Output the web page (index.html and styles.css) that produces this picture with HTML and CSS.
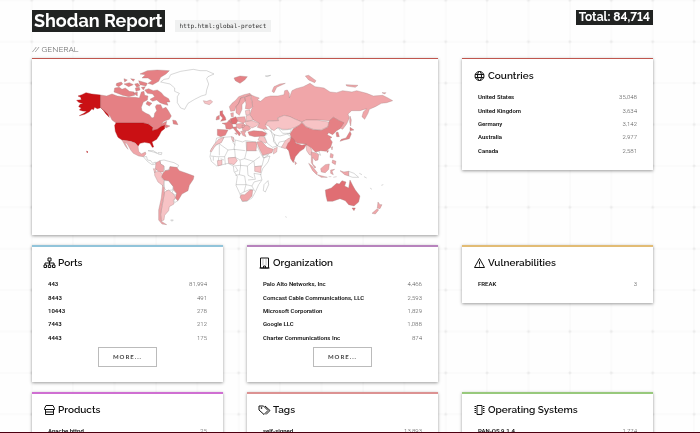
FILE: index.html
```
<!DOCTYPE html>
<html lang="en">
<head>
  <meta charset="UTF-8" />
  <meta name="viewport" content="width=device-width, initial-scale=1.0"/>
  <title>Shodan Report</title>
  <link rel="stylesheet" href="styles.css">
</head>
<body>

  <svg class="backdrop" aria-hidden="true">
    <defs>
      <pattern id="cells" x="11" y="21" width="41.4" height="41.4" patternUnits="userSpaceOnUse">
        <path d="M20.7 0V41.4M0 20.7H41.4" stroke="#f8f8f8" />
        <path d="M19.2 20.7h3M20.7 19.2v3" stroke="#e6e6e6" />
      </pattern>
    </defs>
    <rect width="100%" height="100%" fill="url(#cells)" />
  </svg>

  <div class="page">
    <header>
      <h1>Shodan Report</h1>
      <code>http.html:global-protect</code>
      <div class="total">Total: 84,714</div>
    </header>

    <div class="section">// GENERAL</div>

    <main>
      <section class="card map red">
        <svg viewBox="0 0 406 176" role="img" aria-label="World map">
          <!-- Americas -->
          <g class="land" transform="translate(28 1) scale(.3333)">
            <path class="c5" d="M122 105V143L112 146 104 142 100 150 96 146 88 155 74 163 58 167 72 160 80 154 68 153 58 150 64 144 56 140 60 133 70 131 56 127 50 121 64 119 62 112 54 108 66 104 78 98 95 102ZM122 143L132 150 144 162 148 172 138 162 130 151Z"/>
            <path class="c3" d="M122 105L140 108 156 102 172 108 200 112 226 112 238 114 244 96 252 94 254 106 264 108 262 120 250 126 244 142 246 152 258 160 268 164 276 174 282 172 284 160 290 152 286 140 290 134 302 134 308 146 318 142 326 154 334 168 328 178 312 184 304 192 320 184 318 194 330 198 318 204 312 196 304 198 292 208 276 212 278 200 266 192 250 189H168L156 180 150 168 142 160 132 150 122 143ZM338 180L348 182 354 194 340 192Z"/>
            <path class="c3" d="M254 90L266 86 280 92 292 90 304 98 312 108 326 116 330 126 320 126 324 136 310 132 300 128 290 120 278 124 270 118 284 110 278 102 262 100ZM164 84L178 82 186 88 196 84 208 94 222 96 224 106 206 110 188 106 178 102 162 96ZM170 70L184 66 188 72 176 80 168 76ZM192 72L208 68 220 74 206 80ZM224 72L234 70 240 78 230 82ZM212 56L224 58 220 64ZM192 56L202 60 194 66ZM236 62L262 70 258 78 240 74ZM226 84L238 82 240 90 228 94ZM244 82L256 80 250 90ZM240 42L262 32 292 30 328 32 318 42 302 52 296 64 278 74 264 70 276 62 264 54 246 54 256 44ZM262 124L276 130 268 138 258 132ZM220 100L232 96 232 108Z"/>
            <path class="c5" d="M168 189H250L266 193 278 202 276 212 292 208 304 199 314 196 314 206 304 214 298 226 290 238 276 246 281 261 277 262 270 250 254 247 240 250 234 259 226 249 212 244 186 240 174 232 166 214 164 196ZM80 273L84 276 81 278Z"/>
            <path class="c2" d="M186 240L212 244 226 249 234 258 236 274 244 282 256 276 258 282 250 290 236 288 220 280 212 270 202 252 194 246 204 268 196 258Z"/>
            <path class="c0" d="M250 290L260 290 262 300 272 302 278 310 286 306 288 312 276 314 262 304ZM264 272L280 272 292 280 280 276ZM294 278L306 278 304 284 294 282ZM300 302L312 300 326 304 342 308 356 316 352 324 330 320 326 330 314 332 312 318 302 312ZM312 362L326 362 340 380 338 390 320 392 314 386ZM340 390L350 400 346 406 336 398ZM346 414L354 422 344 428 342 422Z"/>
            <path class="c2" d="M288 308L300 302 302 312 312 318 310 336 298 336 286 326Z"/>
            <path class="c3" d="M304 350L310 338 316 332 328 330 330 320 350 322 358 332 380 340 402 348 400 358 388 376 384 392 366 402 354 422 346 414 350 400 340 388 340 380 326 362 312 360Z"/>
            <path class="c1" d="M284 336L298 334 308 342 304 352 312 362 310 378 294 366 284 346ZM280 326L290 328 284 338ZM314 396L326 390 342 404 346 412 340 422 342 432 328 440 326 452 314 466 312 480 304 484 302 462 308 430Z"/>
            <path class="c2" d="M308 376L313 384 313 400 306 436 302 464 304 484 320 494 306 492 296 480 296 450 304 414Z"/>
            <path class="c0" d="M302 66L312 58 326 56 332 44 362 34 400 28 420 32 440 32 462 42 444 50 440 56 446 72 440 90 438 104 424 108 404 118 384 130 374 148 362 144 352 128 352 110 358 100 344 94 344 84 330 72ZM332 480L340 480 336 484Z"/>
            <path class="c1" d="M430 122L440 124 452 120 458 126 448 134 434 130Z"/>
          </g>
          <!-- Europe, Africa, Asia and Oceania -->
          <g class="land" transform="translate(168 1) scale(.3333)">
            <path class="c2" d="M152 104L166 110 178 114 172 120 182 124 196 112 212 108 234 108 252 104 254 92 262 90 268 100 268 114 276 92 288 86 310 80 330 70 345 80 372 84 390 96 410 98 428 92 456 96 470 92 500 100 520 108 548 106 564 114 578 122 560 128 544 130 526 140 508 148 504 160 494 178 486 170 490 156 500 146 480 152 455 152 444 162 448 174 440 192 428 208 420 204 430 190 420 184 400 172 388 182 362 180 340 180 318 180 306 186 286 178 270 170 252 166 232 174 236 182 204 182 196 196 204 210 190 208 172 202 178 190 160 180 150 164 154 150 158 140 156 124ZM216 94L222 80 240 72 256 70 230 82 222 98ZM316 48L326 46 348 62 344 68 326 60ZM438 74L474 76 466 82 440 78ZM546 98L558 98 554 102ZM450 168L454 180 452 198 449 186Z"/>
            <path class="c3" d="M102 54L120 48 142 50 134 60 120 70 106 62Z"/>
            <path class="c2" d="M88 140L96 130 108 120 116 110 132 104 150 100 154 106 134 110 122 114 116 130 108 140 104 152 92 154ZM116 130L122 114 134 112 136 122 126 134 126 148 118 166 108 158 108 140ZM134 112L150 104 156 126 158 140 148 148 136 146 138 132ZM92 160L100 158 100 170 94 170Z"/>
            <path class="c4" d="M60 154L68 152 68 160 76 172 78 180 62 184 68 174 60 166ZM92 176L108 170 114 182 108 192 94 192Z"/>
            <path class="c3" d="M50 170L58 166 58 178 48 180ZM66 190L80 188 86 182 96 190 100 204 90 208 78 206 76 194ZM52 208L84 210 76 226 62 230 52 226ZM98 202L110 200 110 208 122 220 118 228 104 210ZM86 182L92 176 94 188ZM144 216L160 212 186 214 200 220 194 228 164 230 148 226Z"/>
            <path class="c2" d="M112 172L134 170 138 184 130 190 114 184ZM108 192L130 190 136 196 132 202 118 206 110 202ZM126 196L146 196 152 206 144 212 128 212ZM122 214L138 214 134 220 138 230 128 226ZM104 220L110 218 110 224Z"/>
            <path class="c1" d="M136 184L156 182 178 190 170 198 156 204 146 198 138 194ZM138 168L150 164 160 180 140 184ZM136 152L150 150 150 162 138 166ZM180 228L192 230 202 246 196 250 184 244 174 240Z"/>
            <path class="c0" d="M50 234L70 232 96 230 106 240 128 246 136 242 168 246 170 256 182 280 190 294 210 288 204 306 188 326 182 344 186 360 176 374 166 396 156 414 140 424 126 424 120 402 108 376 112 350 102 334 100 318 84 310 68 314 50 318 34 304 30 290 34 268 46 250ZM204 362L206 374 196 396 190 392 192 374ZM190 208L206 208 214 216 224 224 220 244 232 258 218 262 202 250 194 230 202 222ZM212 210L234 204 248 210 274 208 270 220 262 222 274 232 260 242 246 262 232 258 222 240 216 222ZM188 286L206 284 192 294ZM346 274L356 272 362 286 354 282ZM446 334L462 340 476 352 458 352 446 348ZM478 340L486 344M492 350L500 354M510 384L516 388M544 376L550 374M256 470L260 472M196 48L212 46 202 50Z"/>
            <path class="line" d="M100 232L98 246 106 256M106 240L102 268 136 272M138 244L140 272H172M140 272L134 296 160 304 180 290M72 232L64 246 34 266M56 250L84 270 74 290 50 290 32 288M58 254V286M84 270L104 268 106 292 84 294M56 292L54 316M74 290L76 314M106 292L120 300 134 296M100 318L120 316 142 318 160 304M120 300L122 316M162 304L164 320 186 318 192 294M122 316L118 344 106 346M142 318L144 346 160 354M118 344L134 348 138 374 108 374M138 374L132 396 120 402M138 374L156 378 162 366 184 360M144 360L166 358 162 340 184 344M132 396L150 388 160 390M156 378L164 394M220 224L240 228 262 222M236 206L248 220 270 220M232 258L238 246 260 242M40 290V302M62 296L72 300M106 320L114 332 104 336"/>
            <path class="c1" d="M56 238L72 232 64 248 48 254 34 276 30 274 42 254ZM94 230L100 232 102 246 96 240ZM84 294L106 292 112 302 102 314 86 310ZM52 302L66 300 66 314 54 318ZM164 320L184 318 182 338 164 334ZM204 184L236 182 234 174 252 166 270 170 286 178 306 186 298 196 280 204 262 208 248 208 234 202 222 212 212 206 206 198 196 194ZM306 186L318 180 350 180 386 186 384 200 362 210 340 208 318 200ZM244 262L256 242 264 236 274 232 274 244 262 262 256 266ZM318 254L328 254 336 272 334 286 328 284 320 272ZM222 266L232 262 230 276 220 282Z"/>
            <path class="c2" d="M140 246H168L170 256 168 272H140ZM124 404L134 404 150 390 158 390 156 408 142 422 128 424 120 412ZM170 246L184 244 202 262 220 268 216 278 188 286 178 266ZM334 276L346 278 356 284 354 300 346 302 338 292 338 312 348 322 344 324 334 308ZM326 310L336 318 352 338 350 344 338 332ZM352 344L374 350 382 352 364 352ZM362 326L376 314 388 312 386 328 376 338 364 336ZM392 330L404 328 396 334 400 344 392 340ZM420 332L432 336 446 334V348L434 344ZM392 280L400 284 398 294 390 292ZM398 300L408 304 406 314 396 308ZM394 262L398 260 396 270ZM386 350L394 350M400 352L410 350M534 426L540 434 546 434 540 446 532 444ZM532 446L536 450 526 462 516 460Z"/>
            <path class="c3" d="M306 188L318 201 340 209 364 211 384 201 388 182 400 172 418 182 432 188 420 206 410 212 398 224 386 218 382 224 396 232 390 236 397 246 392 262 378 274 362 272 346 276 332 262 316 252 292 250 276 238 270 222 280 206 298 196ZM408 218L414 216 418 230 410 230ZM450 202L462 210 450 212ZM450 214L454 222 448 236 432 240 420 244 424 238 438 234ZM380 272L386 272 382 278Z"/>
            <path class="c4" d="M258 264L264 250 270 244 274 232 282 238 288 250 306 256 320 252 312 266 300 274 286 290 280 308 272 296 266 272ZM376 390L394 384 410 370 418 372 426 362 438 366 434 378 446 384 450 360 458 376 466 390 480 408 476 426 462 438 446 434 436 422 420 416 398 424 382 424 378 408ZM456 444L466 444 462 452Z"/>
            <path class="c2" d="M284 304L290 310 286 314Z"/>
          </g>
        </svg>
      </section>

      <section class="card red">
        <h2>
          <svg class="icon" viewBox="0 0 24 24"><circle cx="12" cy="12" r="9"/><ellipse cx="12" cy="12" rx="4" ry="9"/><path d="M3 9H21M3 15H21"/></svg>
          Countries
        </h2>
        <table class="full">
          <tr><th scope="row">United States</th><td>35,048</td></tr>
          <tr><th scope="row">United Kingdom</th><td>3,634</td></tr>
          <tr><th scope="row">Germany</th><td>3,142</td></tr>
          <tr><th scope="row">Australia</th><td>2,977</td></tr>
          <tr><th scope="row">Canada</th><td>2,581</td></tr>
        </table>
      </section>

      <section class="card blue">
        <h2>
          <svg class="icon" viewBox="0 0 24 24"><path d="M9 2h6v6H9zM12 8v8M3 16v-4h18v4M1 16h5v5H1zM9.500 16h5v5h-5zM18 16h5v5h-5z"/></svg>
          Ports
        </h2>
        <table class="full">
          <tr><th scope="row">443</th><td>81,994</td></tr>
          <tr><th scope="row">8443</th><td>491</td></tr>
          <tr><th scope="row">10443</th><td>278</td></tr>
          <tr><th scope="row">7443</th><td>212</td></tr>
          <tr><th scope="row">4443</th><td>175</td></tr>
        </table>
        <button type="button">MORE...</button>
      </section>

      <section class="card purple">
        <h2>
          <svg class="icon" viewBox="0 0 24 24"><path d="M4 2h16v20H4zM2 22h20M10 22v-4h4v4"/><path class="windows" d="M8 6h2M14 6h2M8 10h2M14 10h2M8 14h2M14 14h2"/></svg>
          Organization
        </h2>
        <table class="full">
          <tr><th scope="row">Palo Alto Networks, Inc</th><td>4,466</td></tr>
          <tr><th scope="row">Comcast Cable Communications, LLC</th><td>2,593</td></tr>
          <tr><th scope="row">Microsoft Corporation</th><td>1,829</td></tr>
          <tr><th scope="row">Google LLC</th><td>1,088</td></tr>
          <tr><th scope="row">Charter Communications Inc</th><td>874</td></tr>
        </table>
        <button type="button">MORE...</button>
      </section>

      <section class="card orange">
        <h2>
          <svg class="icon" viewBox="0 0 24 24"><path d="M12 3L22 21H2zM12 9v6M12 17v2"/></svg>
          Vulnerabilities
        </h2>
        <table>
          <tr><th scope="row">FREAK</th><td>3</td></tr>
        </table>
      </section>

      <section class="card pink">
        <h2>
          <svg class="icon" viewBox="0 0 24 24"><path d="M5 3h14l3 6v2H2V9zM4 11v10h16V11M4 16h16"/></svg>
          Products
        </h2>
        <table>
          <tr><th scope="row">Apache httpd</th><td>25</td></tr>
        </table>
      </section>

      <section class="card salmon">
        <h2>
          <svg class="icon" viewBox="0 0 24 24"><path d="M1 4h9l9 9-8 8-10-9zM13 4l10 9-8 8"/><circle cx="6" cy="8" r="1"/></svg>
          Tags
        </h2>
        <table>
          <tr><th scope="row">self-signed</th><td>13,893</td></tr>
        </table>
      </section>

      <section class="card green">
        <h2>
          <svg class="icon" viewBox="0 0 24 24"><path d="M7 3h10v18H7z"/><path d="M2 5h3M2 9h3M2 13h3M2 17h3M19 5h3M19 9h3M19 13h3M19 17h3"/></svg>
          Operating Systems
        </h2>
        <table>
          <tr><th scope="row">PAN-OS 9.1.4</th><td>1,774</td></tr>
        </table>
      </section>
    </main>
  </div>

  <div class="bottom-line"></div>

</body>
</html>
```
FILE: styles.css
```
* {
  box-sizing: border-box;
}
html {
  height: 100%;
  overflow: hidden;
}
body {
  margin: 0;
  background-color: #fefefe;
  color: #111;
  font-family: Raleway, Lato, sans-serif;
  font-variant-numeric: lining-nums;
}
.backdrop {
  position: fixed;
  inset: 0;
  width: 100%;
  height: 100%;
  z-index: -1;
}
.page {
  padding: 10px 47px 0 32px;
}
header {
  display: flex;
  align-items: flex-start;
}
h1, .total {
  margin: 0;
  background-color: #212322;
  color: white;
  font-weight: bold;
}
h1 {
  padding: 0 2px;
  font-size: 18px;
  line-height: 22px;
}
code {
  margin: 10px 0 0 10px;
  padding: 0 5px;
  background-color: #f0f1f1;
  color: #333;
  font-family: "DejaVu Sans Mono", monospace;
  font-size: 6px;
  line-height: 12px;
}
.total {
  margin-left: auto;
  padding: 0 3px;
  font-size: 12px;
  line-height: 15px;
}
.section {
  padding: 12px 0 4px;
  color: #777;
  font-size: 8px;
  line-height: 10px;
}
main {
  display: grid;
  grid-template-columns: repeat(3, 1fr);
  gap: 10px 24px;
  align-items: start;
}
.card {
  background-color: white;
  border-top: 2px solid;
  padding: 10px 16px 13px;
  box-shadow: 0 1px 3px rgba(0, 0, 0, 0.4);
}
.map {
  grid-column: span 2;
  padding: 0;
}
.map svg {
  display: block;
  width: 100%;
}
.red { border-top: 1px solid #c0564e; padding-top: 11px; }
.map.red { padding-top: 0; }
.blue { border-color: #91c4da; }
.purple { border-color: #b783bd; }
.orange { border-color: #e2bc75; }
.pink { border-color: #cf6fd2; }
.salmon { border-color: #dc9292; }
.green { border-color: #98c97c; }

/* map shading, light to dark */
.land path {
  stroke: #a08080;
  stroke-width: 1;
}
.land .c0 { fill: white; stroke: #888; }
.land .c1 { fill: #f7c3c5; }
.land .c2 { fill: #f0a6a9; }
.land .c3 { fill: #e58084; }
.land .c4 { fill: #e06e73; }
.land .c5 { fill: #ca1014; stroke: #a51216; }
.land .line { fill: none; stroke: #888; }

h2 {
  display: flex;
  align-items: center;
  gap: 2px;
  margin: 0 0 8px -5px;
  font-size: 10px;
  font-weight: 600;
  line-height: 12px;
}
.icon {
  width: 13px;
  height: 12px;
  fill: none;
  stroke: #111;
  stroke-width: 2;
}
.icon .windows {
  stroke-width: 1;
}
table {
  width: 100%;
  border-collapse: collapse;
  font-family: Roboto, sans-serif;
  font-size: 6px;
  line-height: 13px;
}
.full {
  height: 67px;
}
th, td {
  padding: 0;
}
th {
  font-weight: 600;
  text-align: left;
}
td {
  color: #555;
  font-weight: 300;
  text-align: right;
}
button {
  display: block;
  margin: 3px auto 2px;
  padding: 0 14px;
  border: 1px solid #bbb;
  background-color: white;
  color: #444;
  font-family: Lato, sans-serif;
  font-size: 6px;
  font-weight: bold;
  letter-spacing: 1px;
  line-height: 18px;
}
.bottom-line {
  position: fixed;
  right: 0;
  bottom: 0;
  left: 0;
  height: 1px;
  background-color: #4b0010;
}
```
